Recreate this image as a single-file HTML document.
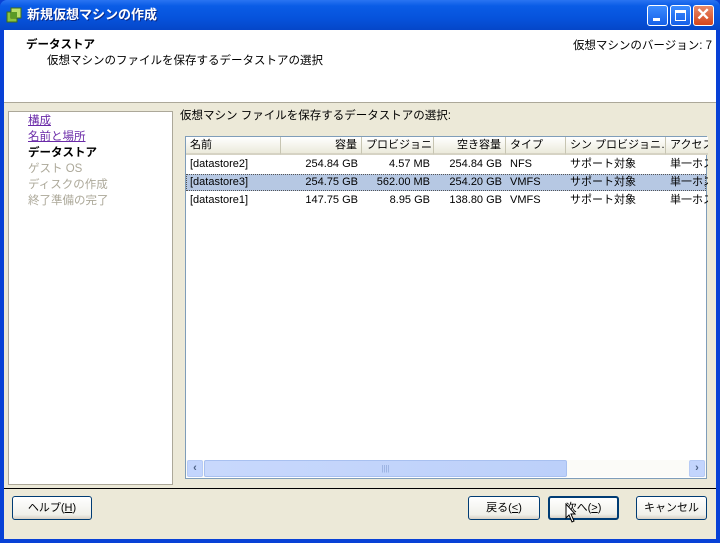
<!DOCTYPE html>
<html><head><meta charset="utf-8"><style>
*{margin:0;padding:0;box-sizing:border-box}
body{width:720px;height:543px;overflow:hidden;background:#0841d6;font-family:"Liberation Sans","Noto Sans CJK JP",sans-serif;font-size:11px;color:#000;position:relative;line-height:13px}
.abs{position:absolute}
#title{left:0;top:0;width:720px;height:30px;background:linear-gradient(#2a74f2,#0a5ce6 20%,#0653dc 60%,#0546c8);border-radius:7px 7px 0 0}
#title .t{left:27px;top:7px;color:#fff;font-weight:bold;font-size:13px;line-height:16px;text-shadow:1px 1px #0a2a8a}
.wb{top:5px;width:21px;height:21px;border:1px solid #fff;border-radius:3px;background:linear-gradient(#3c8cff,#1660e8)}
#client{left:4px;top:30px;width:712px;height:509px;background:#ece9d8}
#hdr{left:4px;top:30px;width:712px;height:73px;background:#fff;border-bottom:1px solid #aca899}
#left{left:8px;top:111px;width:165px;height:374px;background:#fff;border:1px solid #aca899}
#left div{position:absolute;left:19px;font-size:11.5px;line-height:14px}
#list{left:185px;top:136px;width:522px;height:343px;background:#fff;border:1px solid #7f9db9}
.h{position:absolute;top:0;height:18px;background:linear-gradient(#fff,#ebeadb);border-right:1px solid #c7c5b2;border-bottom:2px solid #d6d3c4;padding:2px 4px;white-space:nowrap;overflow:hidden;line-height:13px}
.c{position:absolute;height:16px;padding:2px 4px;white-space:nowrap;overflow:hidden;line-height:12px}
.r{text-align:right}
.btn{top:496px;height:24px;border:1px solid #003c74;border-radius:3px;background:linear-gradient(#fff,#f0f0ea 80%,#d6d0c5);text-align:center;line-height:22px;font-size:11px}
</style></head><body>
<div id="title" class="abs">
 <svg class="abs" style="left:6px;top:7px" width="16" height="16"><rect x="1" y="5" width="10" height="10" fill="#8bc43f" stroke="#3d6b1a"/><rect x="5" y="1" width="10" height="10" fill="#b7de6a" stroke="#3d6b1a"/><rect x="5" y="5" width="6" height="6" fill="#5a9a26"/></svg>
 <div class="t abs">新規仮想マシンの作成</div>
 <div class="wb abs" style="left:647px"><div class="abs" style="left:5px;top:12px;width:7px;height:3px;background:#fff"></div></div>
 <div class="wb abs" style="left:670px"><div class="abs" style="left:4px;top:4px;width:11px;height:11px;border:1px solid #fff;border-top-width:3px"></div></div>
 <div class="wb abs" style="left:693px;background:linear-gradient(#e88a6a,#d5451c)"><div class="abs" style="left:2px;top:-1px;color:#fff;font-size:17px;line-height:20px;font-weight:bold">✕</div></div>
</div>
<div id="client" class="abs"></div>
<div id="hdr" class="abs">
 <div class="abs" style="left:22px;top:9px;font-weight:bold;font-size:11.5px">データストア</div>
 <div class="abs" style="left:43px;top:25px;font-size:11.5px">仮想マシンのファイルを保存するデータストアの選択</div>
 <div class="abs" style="right:4px;top:10px;font-size:11.5px">仮想マシンのバージョン: 7</div>
</div>
<div id="left" class="abs">
 <div style="top:2px;color:#6a2aa8;text-decoration:underline">構成</div>
 <div style="top:18px;color:#6a2aa8;text-decoration:underline">名前と場所</div>
 <div style="top:34px;font-weight:bold">データストア</div>
 <div style="top:50px;color:#aca899">ゲスト OS</div>
 <div style="top:66px;color:#aca899">ディスクの作成</div>
 <div style="top:82px;color:#aca899">終了準備の完了</div>
</div>
<div class="abs" style="left:180px;top:110px;font-size:11.5px">仮想マシン ファイルを保存するデータストアの選択:</div>
<div id="list" class="abs">
 <div class="h" style="left:0;width:95px">名前</div>
 <div class="h r" style="left:95px;width:81px">容量</div>
 <div class="h" style="left:176px;width:72px">プロビジョニ…</div>
 <div class="h r" style="left:248px;width:72px">空き容量</div>
 <div class="h" style="left:320px;width:60px">タイプ</div>
 <div class="h" style="left:380px;width:100px">シン プロビジョニ…</div>
 <div class="h" style="left:480px;width:42px;border-right:0">アクセス</div>
 <div class="abs" style="left:0;top:37px;width:520px;height:17px;background:#b6c8e3;border:1px dotted #555"></div>
 <div class="c" style="left:0;top:19px">[datastore2]</div><div class="c r" style="left:95px;top:19px;width:81px">254.84 GB</div><div class="c r" style="left:176px;top:19px;width:72px">4.57 MB</div><div class="c r" style="left:248px;top:19px;width:72px">254.84 GB</div><div class="c" style="left:320px;top:19px">NFS</div><div class="c" style="left:380px;top:19px">サポート対象</div><div class="c" style="left:480px;top:19px;width:42px">単一ホスト</div>
 <div class="c" style="left:0;top:37px">[datastore3]</div><div class="c r" style="left:95px;top:37px;width:81px">254.75 GB</div><div class="c r" style="left:176px;top:37px;width:72px">562.00 MB</div><div class="c r" style="left:248px;top:37px;width:72px">254.20 GB</div><div class="c" style="left:320px;top:37px">VMFS</div><div class="c" style="left:380px;top:37px">サポート対象</div><div class="c" style="left:480px;top:37px;width:42px">単一ホスト</div>
 <div class="c" style="left:0;top:55px">[datastore1]</div><div class="c r" style="left:95px;top:55px;width:81px">147.75 GB</div><div class="c r" style="left:176px;top:55px;width:72px">8.95 GB</div><div class="c r" style="left:248px;top:55px;width:72px">138.80 GB</div><div class="c" style="left:320px;top:55px">VMFS</div><div class="c" style="left:380px;top:55px">サポート対象</div><div class="c" style="left:480px;top:55px;width:42px">単一ホスト</div>
 <div class="abs" style="left:0;top:323px;width:520px;height:17px;background:#fbfbf8"></div>
 <div class="abs" style="left:1px;top:323px;width:16px;height:17px;border:1px solid #b7cbf5;border-radius:2px;background:#c3d5fd;color:#4d6185;font-weight:bold;text-align:center;line-height:15px">‹</div>
 <div class="abs" style="left:18px;top:323px;width:363px;height:17px;border:1px solid #a8c0f0;border-radius:2px;background:linear-gradient(90deg,#c8d8fc,#bcd0fa);color:#8ea6d8;text-align:center;line-height:15px;font-size:8px">||||</div>
 <div class="abs" style="left:503px;top:323px;width:16px;height:17px;border:1px solid #b7cbf5;border-radius:2px;background:#c3d5fd;color:#4d6185;font-weight:bold;text-align:center;line-height:15px">›</div>
</div>
<div class="abs" style="left:4px;top:488px;width:712px;height:1px;background:#000"></div>
<div class="btn abs" style="left:12px;width:80px">ヘルプ(<u>H</u>)</div>
<div class="btn abs" style="left:468px;width:72px">戻る(<u>&lt;</u>)</div>
<div class="btn abs" style="left:548px;width:71px;border-width:2px;line-height:20px">次へ(<u>&gt;</u>)</div>
<div class="btn abs" style="left:636px;width:71px">キャンセル</div>
<svg class="abs" style="left:565px;top:503px" width="12" height="20"><path d="M1 1 L1 15 L4 12 L7 19 L9 18 L6 11 L10 11 Z" fill="#fff" stroke="#000"/></svg>
</body></html>
